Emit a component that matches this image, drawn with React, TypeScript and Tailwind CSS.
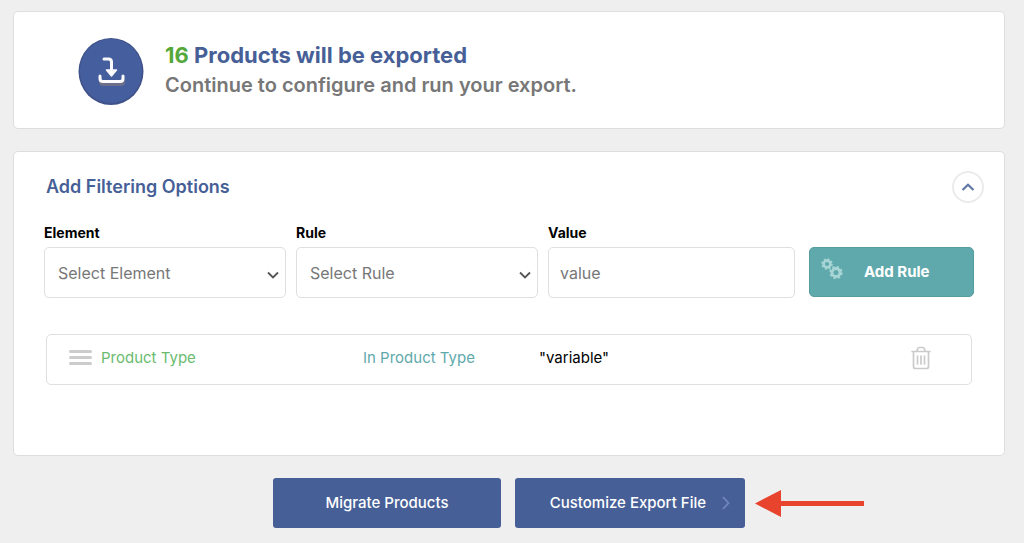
import React, { useState } from 'react'

interface FilterRule {
  element: string
  rule: string
  value: string
}

const initialRules: FilterRule[] = [
  { element: 'Product Type', rule: 'In Product Type', value: 'variable' },
]

const fieldStyle =
  'block w-full h-[51px] rounded-[5px] border border-[#dfdfdf] bg-white text-base text-[#777777] placeholder:text-[#777777] outline-none focus:border-[#475f97]'

function ExportIcon() {
  return (
    <svg className="w-[66px] h-[70px] shrink-0" viewBox="0 0 66 70" fill="none" aria-hidden="true">
      <ellipse cx="33" cy="36.500" rx="32.500" ry="33.500" fill="#40528a" />
      <ellipse cx="33" cy="36" rx="31" ry="32" fill="#455f9e" />
      <path d="M22.500 43.500v3q0 3 3 3h17q3 0 3-3v-3" stroke="#6d6f8a" strokeWidth="3" strokeLinecap="round" />
      <g stroke="#fbfbfd" strokeWidth="3" strokeLinecap="round" strokeLinejoin="round">
        <path d="M22 41v2.500q0 3 3 3h17q3 0 3-3v-2.500" />
        <path d="M26 24h4.500q3 0 3 3v11" />
      </g>
      <path d="M28.500 35l5 6 5-6z" fill="#fbfbfd" stroke="#fbfbfd" strokeWidth="1.500" strokeLinejoin="round" />
    </svg>
  )
}

function GearsIcon() {
  return (
    <svg className="w-[22px] h-[22px]" viewBox="0 0 22 22" fill="none" stroke="#a8d5d6" aria-hidden="true">
      <circle cx="6" cy="6" r="3.400" strokeWidth="2.600" />
      <circle cx="6" cy="6" r="5" strokeWidth="1.500" strokeDasharray="2 1.927" />
      <circle cx="15" cy="14.500" r="4" strokeWidth="2.900" />
      <circle cx="15" cy="14.500" r="5.800" strokeWidth="1.700" strokeDasharray="2.400 2.155" />
    </svg>
  )
}

function TrashIcon() {
  return (
    <svg className="w-5 h-6" viewBox="0 0 20 24" fill="none" stroke="#cbcbcb" strokeWidth="1.700" strokeLinecap="round" aria-hidden="true">
      <path d="M1 5.500h18M2.500 5.500v15q0 2 2 2h11q2 0 2-2v-15" />
      <path d="M6 5l.5-2q.3-1.500 1.700-1.500h3.600q1.400 0 1.700 1.500l.5 2" />
      <path d="M6.500 10v8M10 10v8M13.500 10v8" />
    </svg>
  )
}

interface SelectFieldProps {
  id: string
  label: string
  placeholder: string
}

function SelectField({ id, label, placeholder }: SelectFieldProps) {
  return (
    <div className="mr-2.5">
      <label htmlFor={id} className="block mb-1 text-sm leading-5 font-bold text-black">
        {label}
      </label>
      <div className="relative">
        <select id={id} className={`${fieldStyle} appearance-none pl-[13px] pr-8`}>
          <option>{placeholder}</option>
        </select>
        <svg
          className="absolute right-[7px] top-6 w-3 h-2 pointer-events-none"
          viewBox="0 0 12 8"
          fill="none"
          stroke="#555555"
          strokeWidth="1.800"
          aria-hidden="true"
        >
          <path d="M1 1.500l5 5 5-5" />
        </svg>
      </div>
    </div>
  )
}

function FilterPanel() {
  const [isOpen, setIsOpen] = useState(true)
  const [rules, setRules] = useState(initialRules)

  const handleRemove = (index: number) => {
    setRules(rules.filter((_, i) => i !== index))
  }

  return (
    <section className="mt-[22px] rounded-[5px] border border-[#dedede] bg-white">
      <div className="flex items-center justify-between pt-[19px] pl-8 pr-5">
        <h2 className="text-lg leading-8 font-semibold text-[#475f97]">Add Filtering Options</h2>
        <button
          type="button"
          aria-label="Toggle filtering options"
          className="flex w-8 h-8 items-center justify-center rounded-full border-2 border-[#ebebeb] bg-white"
          onClick={() => setIsOpen(!isOpen)}
        >
          <svg className="w-3 h-2" viewBox="0 0 12 8" fill="none" stroke="#5f77a5" strokeWidth="2.200" aria-hidden="true">
            <path d="M.5 7L6 1.700 11.500 7" />
          </svg>
        </button>
      </div>

      {isOpen && (
        <div className="px-[30px] pt-5 pb-[70px]">
          <form
            className="grid grid-cols-[252fr_252fr_261fr_165px] items-start"
            onSubmit={(e) => e.preventDefault()}
          >
            <SelectField id="element" label="Element" placeholder="Select Element" />
            <SelectField id="rule" label="Rule" placeholder="Select Rule" />
            <div className="mr-3.5">
              <label htmlFor="value" className="block mb-1 text-sm leading-5 font-bold text-black">
                Value
              </label>
              <input id="value" type="text" placeholder="value" className={`${fieldStyle} px-[11px]`} />
            </div>
            <button
              type="submit"
              className="mt-6 flex h-[50px] items-start rounded-[5px] border border-[#559da0] bg-[#5fa9ac] pl-[11px] pt-2.5 text-white"
            >
              <GearsIcon />
              <span className="ml-[21px] text-[15px] leading-7 font-bold">Add Rule</span>
            </button>
          </form>

          <ul className="mx-0.5 mt-9">
            {rules.map((item, index) => (
              <li
                key={item.element}
                className="grid grid-cols-[32px_262fr_176fr_372fr_20px] h-[51px] items-center rounded-[5px] border border-[#dfdfdf] pl-[22px] pr-10 pb-1 text-[15px] leading-6"
              >
                <span className="flex w-[23px] flex-col gap-[3px]">
                  <span className="h-[3px] rounded-full bg-[#cccccc]" />
                  <span className="h-[3px] rounded-full bg-[#cccccc]" />
                  <span className="h-[3px] rounded-full bg-[#cccccc]" />
                </span>
                <span className="text-[#6abb70]">{item.element}</span>
                <span className="text-[#5fa9ac]">{item.rule}</span>
                <span className="text-black">"{item.value}"</span>
                <button type="button" aria-label="Delete rule" onClick={() => handleRemove(index)}>
                  <TrashIcon />
                </button>
              </li>
            ))}
          </ul>
        </div>
      )}
    </section>
  )
}

export default function App() {
  return (
    <main className="min-h-screen bg-[#efefef] pl-[13px] pr-[19px] pt-[11px] pb-4 font-['Inter',sans-serif]">
      <section className="flex items-center gap-[21px] rounded-[5px] border border-[#dedede] bg-white h-[118px] pl-16 pr-8">
        <ExportIcon />
        <div>
          <h1 className="text-[22px] leading-[30px] font-bold text-[#475f97]">
            <span className="text-[#55a83a]">16</span> Products will be exported
          </h1>
          <p className="text-xl leading-[30px] font-semibold text-[#777777]">
            Continue to configure and run your export.
          </p>
        </div>
      </section>

      <FilterPanel />

      <div className="mt-[22px] flex justify-center gap-3.5">
        <button type="button" className="w-[228px] h-[50px] rounded-[3px] bg-[#475f97] text-[15px] font-medium text-white">
          Migrate Products
        </button>
        <div className="relative">
          <button
            type="button"
            className="flex w-[230px] h-[50px] items-center justify-end gap-4 rounded-[3px] bg-[#475f97] pr-[15px] text-[15px] font-medium text-white"
          >
            Customize Export File
            <svg className="w-2 h-[14px]" viewBox="0 0 8 14" fill="none" stroke="#7187bb" strokeWidth="1.800" aria-hidden="true">
              <path d="M1 1l5.500 6L1 13" />
            </svg>
          </button>
          <svg className="absolute left-full top-3 ml-2.5 w-[109px] h-[27px]" viewBox="0 0 109 27" fill="#e8432d" aria-hidden="true">
            <path d="M0 13.500L26 0v11h83v5H26v11z" />
          </svg>
        </div>
      </div>
    </main>
  )
}
